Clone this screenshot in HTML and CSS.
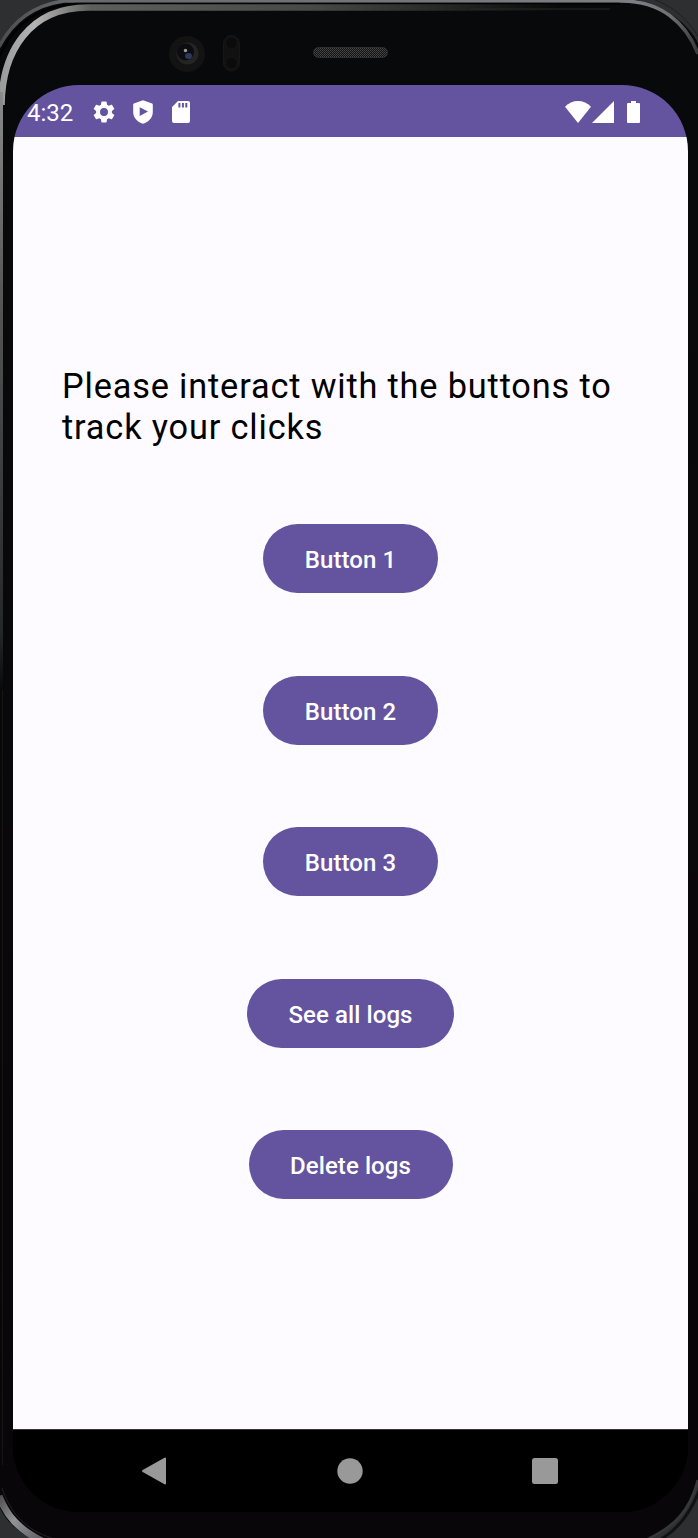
FILE: index.html
```html
<!DOCTYPE html>
<html lang="en">
<head>
<meta charset="utf-8">
<title>Click tracker</title>
<link rel="stylesheet" href="styles.css">
</head>
<body>
<div class="device">
  <svg class="frame" viewBox="0 0 698 1538" fill="none" aria-hidden="true">
    <defs>
      <linearGradient id="rim" gradientUnits="userSpaceOnUse" x1="0" y1="0" x2="698" y2="0">
        <stop offset="0" stop-color="#9a9a9a"/><stop offset=".05" stop-color="#b4b4b4"/><stop offset=".09" stop-color="#8a8a8a"/><stop offset=".13" stop-color="#5e5e5e"/><stop offset=".45" stop-color="#484848"/><stop offset=".8" stop-color="#09090a"/>
      </linearGradient>
      <linearGradient id="side" x1="0" y1="0" x2="0" y2="1">
        <stop offset="0" stop-color="#8b8b8b"/><stop offset=".35" stop-color="#555"/><stop offset=".9" stop-color="#25282a"/><stop offset="1" stop-color="#080809"/>
      </linearGradient>
      <linearGradient id="outer" gradientUnits="userSpaceOnUse" x1="0" y1="0" x2="698" y2="0">
        <stop offset="0" stop-color="#4c4e51"/><stop offset=".1" stop-color="#66686c"/><stop offset=".91" stop-color="#7d7f84"/><stop offset=".96" stop-color="#707175"/><stop offset="1" stop-color="#38393b"/>
      </linearGradient>
      <linearGradient id="bottomRim" gradientUnits="userSpaceOnUse" x1="0" y1="1490" x2="50" y2="1538">
        <stop offset="0" stop-color="#444"/><stop offset=".45" stop-color="#929396"/><stop offset="1" stop-color="#58585c"/>
      </linearGradient>
      <linearGradient id="body" x1="0" y1="0" x2="0" y2="1">
        <stop offset="0" stop-color="#08090a"/><stop offset="1" stop-color="#090609"/>
      </linearGradient>
      <pattern id="mesh" width="2" height="2" patternUnits="userSpaceOnUse">
        <rect width="2" height="2" fill="#151515"/><rect width="1" height="1" fill="#464646"/><rect x="1" y="1" width="1" height="1" fill="#3d3d3d"/>
      </pattern>
    </defs>
    <rect width="698" height="1538" fill="#2d2f31"/>
    <path d="M62 0H636C667 6 689 25 698 43V1482C691 1509 674 1528 653 1538H30C14 1529 5 1519 0 1508V43C12 21 34 5 62 0Z" fill="url(#body)"/>
    <path d="M-1 47C12 22 34 5 64 1H622C660 1 686 22 698 54" stroke="url(#outer)" stroke-width="3.500"/>
    <path d="M655 0C675 7 690 22 699 38" stroke="#1e1f20"/>
    <path d="M-1 58C12 26 36 6 76 3.700H620" stroke="#020203" stroke-width="2"/>
    <path d="M1.500 105C2 52 29 7.500 88 7.500H560" stroke="url(#rim)" stroke-width="6.500"/>
    <path d="M470 9H610" stroke="#29292a"/>
    <rect y="92" width="3" height="600" fill="url(#side)"/>
    <path d="M2.500 690V1465" stroke="#151516"/>
    <path d="M-1 1496C7 1516 18 1529 42 1541" stroke="url(#bottomRim)" stroke-width="7"/>
    <path d="M2 1488C10 1512 25 1530 52 1538" stroke="#222225"/>
    <path d="M698 1480C690 1511 674 1527 648 1539" stroke="#363739" stroke-width="3"/>
    <path d="M699 1491C689 1516 677 1530 661 1539" stroke="#111214" stroke-width="3"/>
    <circle cx="187" cy="54" r="18" fill="#131313"/>
    <circle cx="187.500" cy="53.500" r="11" fill="#242425"/>
    <circle cx="185.500" cy="52" r="8.500" fill="#0c0c11"/>
    <ellipse cx="188.500" cy="56" rx="3.500" ry="3" fill="#30395c"/>
    <circle cx="185.500" cy="50.500" r="1.700" fill="#999aa0"/>
    <rect x="223.500" y="35.500" width="16" height="35.500" rx="8" fill="#111112" stroke="#171718"/>
    <circle cx="231.500" cy="43" r="6" fill="#0b0b0c" stroke="#171718"/>
    <circle cx="231.500" cy="63" r="6" fill="#0b0b0c" stroke="#171718"/>
    <rect x="313.500" y="47.500" width="74" height="10" rx="5" fill="url(#mesh)" stroke="#2d2d2d"/>
  </svg>
  <main class="screen">
    <header class="status">
      <span class="time">4:32</span>
      <svg class="icon gear" viewBox="2 2 20 20"><path d="M19.140 12.940c.04-.3.06-.61.06-.94 0-.32-.02-.64-.07-.94l2.030-1.580a.49.49 0 0 0 .12-.61l-1.920-3.320a.488.488 0 0 0-.59-.22l-2.390.96c-.5-.38-1.030-.7-1.620-.94l-.36-2.540a.484.484 0 0 0-.48-.41h-3.840c-.24 0-.43.17-.47.41l-.36 2.540c-.59.24-1.130.57-1.620.94l-2.390-.96c-.22-.08-.47 0-.59.22L2.740 8.870c-.12.21-.08.47.12.61l2.030 1.580c-.05.3-.09.63-.09.94s.02.64.07.94l-2.030 1.580a.49.49 0 0 0-.12.61l1.920 3.320c.12.22.37.29.59.22l2.390-.96c.5.38 1.030.7 1.620.94l.36 2.540c.05.24.24.41.48.41h3.840c.24 0 .44-.17.47-.41l.36-2.540c.59-.24 1.130-.56 1.620-.94l2.390.96c.22.08.47 0 .59-.22l1.920-3.320c.12-.22.07-.47-.12-.61l-2.010-1.580zM12 15.600A3.600 3.600 0 1 1 12 8.400a3.600 3.600 0 0 1 0 7.200z"/></svg>
      <svg class="icon shield" viewBox="0 0 20 24"><path fill-rule="evenodd" d="M10 .2 19.200 3.600Q19.800 4 19.800 5v7c0 5.500-4 10-9.800 11.800C4.200 22 .2 17.500.2 12V5Q.2 4 .8 3.600ZM6.700 7.200V16L15 11.600Z"/></svg>
      <svg class="icon card" viewBox="0 0 18 22"><path fill-rule="evenodd" d="M6 0h10q2 0 2 2v18q0 2-2 2H2q-2 0-2-2V6ZM6.400 2v4.600h2V2Zm3.500 0v4.600h2V2Zm3.400 0v4.600h2V2Z"/></svg>
      <svg class="icon wifi" viewBox="0 0 26 22"><path d="M0 5.700Q5.500 0 13 0t13 5.700L13 22Z"/></svg>
      <svg class="icon signal" viewBox="0 0 22 22"><path d="M22 0v22H0Z"/></svg>
      <svg class="icon battery" viewBox="0 0 13 22"><path d="M4 0h5v2h3q1 0 1 1v18q0 1-1 1H1q-1 0-1-1V3q0-1 1-1h3Z"/></svg>
    </header>
    <section class="content">
      <p class="prompt">Please interact with the buttons to track your clicks</p>
      <div class="actions">
        <button class="action numbered">Button 1</button>
        <button class="action numbered">Button 2</button>
        <button class="action numbered">Button 3</button>
        <button class="action see">See all logs</button>
        <button class="action delete">Delete logs</button>
      </div>
    </section>
    <nav class="nav">
      <svg class="navicon" viewBox="0 0 28 28"><path d="M24.500.8Q26 0 26 1.700V26.300q0 1.700-1.500.9L2.700 15Q1 14 2.700 13Z"/></svg>
      <svg class="navicon" viewBox="0 0 28 28"><circle cx="14" cy="14" r="12.700"/></svg>
      <svg class="navicon" viewBox="0 0 28 28"><rect x="1" y="1" width="26" height="26" rx="2.500"/></svg>
    </nav>
  </main>
</div>
</body>
</html>
```
FILE: styles.css
```css
* { box-sizing: border-box; }
body { margin: 0; background: #2d2f31; font-family: Roboto, sans-serif; }
.device { position: relative; width: 698px; height: 1538px; padding: 85px 10px 26px 13px; overflow: hidden; }
.frame { position: absolute; inset: 0; width: 698px; height: 1538px; }
.screen { position: relative; display: flex; flex-direction: column; width: 675px; height: 1427px; border-radius: 66px; overflow: hidden; background: #000; }
.status { display: flex; align-items: center; height: 52px; padding: 2px 48px 0 14px; background: #64539f; color: #fff; flex: none; }
.time { width: 66px; padding-top: 2px; font-size: 24px; line-height: 28px; }
.icon { display: block; flex: none; fill: #fff; }
.gear { width: 22px; height: 22px; }
.shield { width: 20px; height: 24px; margin-left: 18px; }
.card { width: 18px; height: 22px; margin-left: 19px; }
.wifi { width: 26px; height: 22px; margin-left: auto; }
.signal { width: 22px; height: 22px; margin-left: 1px; margin-right: 1px; }
.battery { width: 13px; height: 22px; margin-left: 12px; }
.content { flex: 1; padding: 229px 48px 0 49px; background: #fdfbff; }
.prompt { margin: 0; font-size: 34.300px; line-height: 41.300px; letter-spacing: .84px; color: #000; }
.actions { display: flex; flex-direction: column; align-items: center; gap: 82.600px; margin-left: -1px; padding-top: 75.600px; }
.action { height: 68.900px; padding: 3px 0 0; border: 0; border-radius: 35px; background: #64539f; color: #fff; font: 500 24px/28px Roboto, sans-serif; letter-spacing: .08px; }
.numbered { width: 175px; }
.see { width: 207px; }
.delete { width: 204px; }
.nav { display: flex; justify-content: space-between; align-items: center; flex: none; height: 83px; padding: 0 129px 0 127px; border-top: 1px solid #343936; background: #000; }
.navicon { width: 28px; height: 28px; fill: #999; }
```
